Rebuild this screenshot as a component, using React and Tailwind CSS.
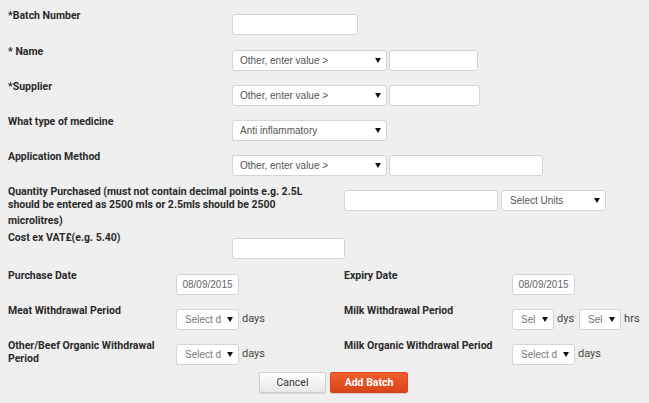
import React from 'react';

const Arrow = () => (
  <svg width="6" height="5" viewBox="0 0 6 5" className="shrink-0">
    <polygon points="0,0 6,0 3,5" fill="#111" />
  </svg>
);

function Select({ width, text, pad = 'pl-[7px]', tone = 'text-[#555]' }) {
  return (
    <div
      className={`h-[21px] bg-white border border-[#d4d4d4] rounded-[3px] flex items-center justify-between pr-[5px] ${pad} ${tone} overflow-hidden whitespace-nowrap`}
      style={{ width }}
    >
      <span className="overflow-hidden">{text}</span>
      <Arrow />
    </div>
  );
}

function Box({ width, text }) {
  return (
    <div
      className="h-[21px] bg-white border border-[#d4d4d4] rounded-[3px] flex items-center justify-center text-[#666]"
      style={{ width }}
    >
      {text}
    </div>
  );
}

function Label({ children, w = 'w-[224px]' }) {
  return <div className={`${w} shrink-0 mt-[1px] font-bold text-[#2a2a2a] text-[10.5px] font-['Roboto',sans-serif] leading-[13px]`}>{children}</div>;
}

function Unit({ children }) {
  return <span className="ml-[3px] text-[#444] text-[11px] font-['Roboto',sans-serif]">{children}</span>;
}

export default function App() {
  return (
    <div className="w-[649px] h-[403px] bg-[#efefef] overflow-hidden pl-[8px] pt-[8px] text-[10px] font-['Liberation_Sans',Arial,sans-serif]">
      {/* full width rows */}
      <div className="flex h-[36px]">
        <Label>*Batch Number</Label>
        <div className="mt-[6px]"><Box width={126} /></div>
      </div>
      <div className="flex h-[35px]">
        <Label>* Name</Label>
        <div className="mt-[6px] flex gap-[2px]">
          <Select width={155} text="Other, enter value >" />
          <Box width={89} />
        </div>
      </div>
      <div className="flex h-[35px]">
        <Label>*Supplier</Label>
        <div className="mt-[6px] flex gap-[2px]">
          <Select width={155} text="Other, enter value >" />
          <Box width={91} />
        </div>
      </div>
      <div className="flex h-[35px]">
        <Label>What type of medicine</Label>
        <div className="mt-[6px]">
          <Select width={155} text="Anti inflammatory" />
        </div>
      </div>
      <div className="flex h-[35px]">
        <Label>Application Method</Label>
        <div className="mt-[6px] flex gap-[2px]">
          <Select width={155} text="Other, enter value >" />
          <Box width={154} />
        </div>
      </div>
      <div className="flex h-[46px]">
        <Label w="w-[336px]">
          <div>Quantity Purchased (must not contain decimal points e.g. 2.5L</div>
          <div>should be entered as 2500 mls or 2.5mls should be 2500</div>
          <div className="mt-[3px]">microlitres)</div>
        </Label>
        <div className="mt-[6px] flex gap-[3px]">
          <Box width={154} />
          <Select width={105} text="Select Units" pad="pl-[8px]" />
        </div>
      </div>
      <div className="flex h-[38px]">
        <Label>Cost ex VAT£(e.g. 5.40)</Label>
        <div className="mt-[8px]"><Box width={113} /></div>
      </div>

      {/* two column rows */}
      <div className="flex h-[35px]">
        <div className="flex w-[336px]">
          <Label w="w-[168px]">Purchase Date</Label>
          <div className="mt-[6px]"><Box width={63} text="08/09/2015" /></div>
        </div>
        <div className="flex">
          <Label w="w-[168px]">Expiry Date</Label>
          <div className="mt-[6px]"><Box width={63} text="08/09/2015" /></div>
        </div>
      </div>
      <div className="flex h-[35px]">
        <div className="flex w-[336px]">
          <Label w="w-[168px]">Meat Withdrawal Period</Label>
          <div className="mt-[6px] flex items-center self-start">
            <Select width={63} text="Select d" pad="pl-[8px]" tone="text-[#777]" />
            <Unit>days</Unit>
          </div>
        </div>
        <div className="flex">
          <Label w="w-[168px]">Milk Withdrawal Period</Label>
          <div className="mt-[6px] flex items-center self-start">
            <Select width={42} text="Sel" pad="pl-[8px]" tone="text-[#777]" />
            <Unit>dys</Unit>
            <div className="ml-[5px]">
              <Select width={42} text="Sel" pad="pl-[8px]" tone="text-[#777]" />
            </div>
            <Unit>hrs</Unit>
          </div>
        </div>
      </div>
      <div className="flex h-[34px]">
        <div className="flex w-[336px]">
          <Label w="w-[168px]">Other/Beef Organic Withdrawal<br />Period</Label>
          <div className="mt-[6px] flex items-center self-start">
            <Select width={63} text="Select d" pad="pl-[8px]" tone="text-[#777]" />
            <Unit>days</Unit>
          </div>
        </div>
        <div className="flex">
          <Label w="w-[168px]">Milk Organic Withdrawal Period</Label>
          <div className="mt-[6px] flex items-center self-start">
            <Select width={63} text="Select d" pad="pl-[8px]" tone="text-[#777]" />
            <Unit>days</Unit>
          </div>
        </div>
      </div>

      {/* buttons */}
      <div className="flex gap-[4px] pl-[251px] font-['Roboto',sans-serif]">
        <button className="w-[67px] h-[21px] rounded-[2px] border border-[#cfcfcf] bg-gradient-to-b from-white to-[#e8e8e8] text-[#333] text-[10.5px] shadow-[0_1px_1px_rgba(0,0,0,0.1)]">
          Cancel
        </button>
        <button className="w-[78px] h-[21px] rounded-[2px] border border-[#d84a1b] bg-gradient-to-b from-[#f45e2c] to-[#d8431a] text-white font-bold text-[10.5px] shadow-[0_1px_1px_rgba(0,0,0,0.15)]">
          Add Batch
        </button>
      </div>
    </div>
  );
}
